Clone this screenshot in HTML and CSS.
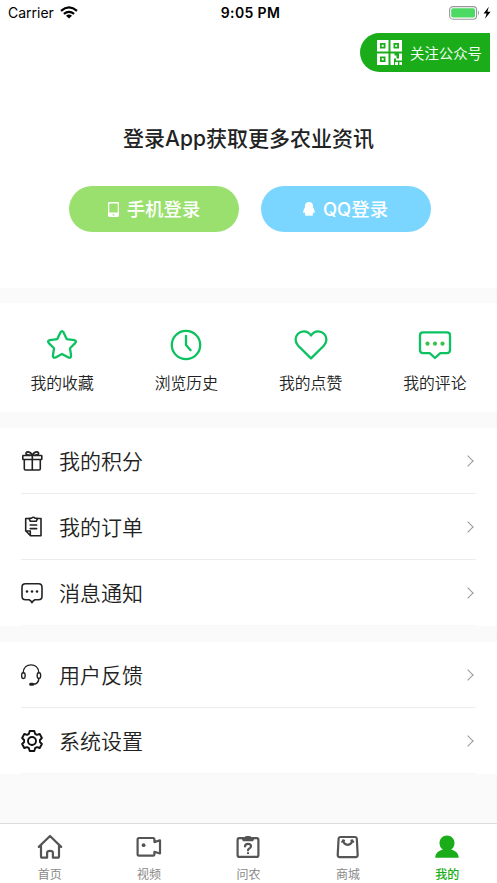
FILE: index.html
```html
<!DOCTYPE html>
<html lang="zh-CN">
<head>
<meta charset="utf-8">
<title>我的</title>
<link rel="stylesheet" href="styles.css">
</head>
<body>
<div class="app">
  <header class="hero">
    <div class="status">
      <div class="carrier"><span>Carrier</span>
        <svg width="18" height="13" viewBox="0 0 18 13"><g fill="none" stroke="#000" stroke-width="2.2"><path d="M1 4.8Q9-2 17 4.8"/><path d="M3.9 7.9Q9 3.8 14.1 7.9"/></g><path d="M9 12.6 6 9.7Q9 7.4 12 9.7z"/></svg>
      </div>
      <time class="time">9:05 PM</time>
      <svg class="battery" width="42" height="14" viewBox="0 0 42 14"><rect x=".6" y=".6" width="27" height="12.6" rx="3.4" fill="#fff" stroke="#98989c" stroke-width="1.1"/><rect x="2.2" y="2.2" width="23.8" height="9.4" rx="1.8" fill="#4cd964"/><path d="M29 4.6q2 2.3 0 4.6z" fill="#98989c"/><path d="M39.8.8 34.6 7.4H37.6L36 12.8 41.6 5.8H38.4z"/></svg>
    </div>
    <a class="follow">
      <svg width="25" height="25" viewBox="0 0 25 25" fill="#fff"><path fill-rule="evenodd" d="M0 0h11.500v11.500H0zM3 3v5.500h5.500V3zM13.500 0H25v11.500H13.500zM16.500 3v5.500H22V3zM0 13.500h11.500V25H0zM3 16.500V22h5.500v-5.500z"/><path d="M4.700 4.700h2v2h-2zM18.200 4.700h2v2h-2zM4.700 18.200h2v2h-2zM13.500 13.500h4v2h2v3H22v-5h3v7h-6v-2h-2V25h-3.500zM18 22h3v3h-3zM22.400 22H25v3h-2.600z"/></svg>
      <span>关注公众号</span>
    </a>
    <h1 class="title">登录App获取更多农业资讯</h1>
    <div class="logins">
      <a class="login phone"><svg width="11" height="15" viewBox="0 0 11 15"><path fill="#fff" fill-rule="evenodd" d="M1.400 0h8.200Q11 0 11 1.400v12.200Q11 15 9.600 15H1.400Q0 15 0 13.600V1.400Q0 0 1.400 0zM1.300 1.400v9.200h8.400V1.400zM4.700 12.200h1.600v1.200H4.700z"/></svg><span>手机登录</span></a>
      <a class="login qq"><svg width="12" height="14" viewBox="0 0 12 14"><path fill="#fff" d="M6 0C3.300 0 1.900 1.800 1.900 4.400V5.500C1 7 0 9 .3 10.800q.2.800 1.200-.5.200 1 .9 1.700Q1.500 12.600 2 13.300q2 1 4 .1 2 .9 4-.1.500-.7-.4-1.300.7-.7.9-1.700 1 1.300 1.200.5C12 9 11 7 10.100 5.500V4.400C10.100 1.800 8.700 0 6 0z"/></svg><span>QQ登录</span></a>
    </div>
  </header>

  <nav class="quick">
    <a><svg width="34" height="34" viewBox="0 0 34 34"><path d="M15.400 4.400q1.600-2.600 3.200 0l3.100 6.700 7.500 1q2.800.7 1 3l-5.200 5.100 1.100 7.400q0 2.800-2.700 1.800L17 26l-6.400 3.400q-2.700 1-2.700-1.800L9 20.200l-5.200-5.100q-1.800-2.300 1-3l7.500-1z"/></svg><span>我的收藏</span></a>
    <a><svg width="34" height="34" viewBox="0 0 34 34"><circle cx="17" cy="17" r="14.200"/><path d="M17 8v9l4.600 5.200"/></svg><span>浏览历史</span></a>
    <a><svg width="34" height="34" viewBox="0 0 34 34"><path d="M17 7.500C15.300 4.800 12.600 3.300 9.900 3.300 5.300 3.300 1.600 7 1.600 11.500c0 2.600 1 4.500 2.600 6.200L17 30.400l12.800-12.700c1.600-1.700 2.600-3.600 2.600-6.200 0-4.500-3.700-8.200-8.300-8.200-2.700 0-5.400 1.500-7.100 4.200z"/></svg><span>我的点赞</span></a>
    <a><svg width="34" height="34" viewBox="0 0 34 34"><path d="M5 4.400h24q3 0 3 3v14.700q0 3-3 3h-6.700L17 30l-5.300-4.900H5q-3 0-3-3V7.400q0-3 3-3z"/><g class="dots"><circle cx="9.500" cy="15.700" r="2.100"/><circle cx="17" cy="15.700" r="2.100"/><circle cx="24.500" cy="15.700" r="2.100"/></g></svg><span>我的评论</span></a>
  </nav>

  <section class="list">
    <a class="row"><svg class="icon" width="24" height="24" viewBox="0 0 24 24"><path d="M3.300 6.500h18q.5 0 .5.500v3q0 .5-.5.500h-18q-.5 0-.5-.5V7q0-.5.500-.5zM4.300 10.500v9.300q0 1.200 1.200 1.200h13.600q1.200 0 1.200-1.200v-9.300M12.300 6.500V21M12.300 6.200C7.300 6.400 5.300 5.200 6.100 3.800 7.300 2 10.800 3 12.300 6.200 13.800 3 17.300 2 18.500 3.800 19.300 5.200 17.300 6.400 12.300 6.200"/></svg><span>我的积分</span><i class="arrow"></i></a>
    <a class="row"><svg class="icon" width="24" height="24" viewBox="0 0 24 24"><path d="M9 3.500H5.700v12.300l4.800 5H21V3.500h-3.400M5.700 16h4.600v4.600M10.200 10h6.500M10.200 13.600h6.500M9 3.300h2.500q1.800-2.200 3.600 0h2.500L16.200 6.300h-5.800z"/></svg><span>我的订单</span><i class="arrow"></i></a>
    <a class="row"><svg class="icon" width="24" height="24" viewBox="0 0 24 24"><path d="M5.500 2.700h13q3.500 0 3.500 3.500v9.100q0 3.500-3.500 3.500h-3.600Q13 19.700 12 21.700 11 19.700 9.100 18.800H5.500Q2 18.800 2 15.300V6.200q0-3.500 3.500-3.500z"/><g class="dots"><circle cx="7" cy="10.500" r="1.300"/><circle cx="12" cy="10.500" r="1.300"/><circle cx="17" cy="10.500" r="1.300"/></g></svg><span>消息通知</span><i class="arrow"></i></a>
  </section>

  <section class="list second">
    <a class="row"><svg class="icon thin" width="24" height="24" viewBox="0 0 24 24"><path d="M3.200 9.700C3.500 4.500 6.900 1.900 11 1.900S18.500 4.500 18.800 9.700M18.800 15.300C18.800 19.500 16.900 21.100 13.500 21.300"/><rect x="1.700" y="9.700" width="3.400" height="5.800" rx="1.700"/><rect x="17.200" y="9.700" width="3.400" height="5.800" rx="1.700"/><rect x="9.800" y="20.400" width="3.700" height="1.700" rx=".8" fill="#222"/></svg><span>用户反馈</span><i class="arrow"></i></a>
    <a class="row"><svg class="icon bold" width="24" height="24" viewBox="0 0 24 24"><path d="M9.700 2h4.600l.8 2.800 1.800 1 2.800-.8 2.200 4-2 2v2l2 2-2.200 4-2.800-.8-1.800 1-.8 2.800H9.700l-.8-2.800-1.800-1-2.800.8-2.200-4 2-2v-2l-2-2 2.200-4 2.800.8 1.800-1z"/><circle cx="12" cy="12" r="4"/></svg><span>系统设置</span><i class="arrow"></i></a>
  </section>

  <nav class="tabs">
    <a><svg width="26" height="26" viewBox="0 0 26 26"><path d="M1.800 12.900 13 2l11.200 10.900M4 11v11.200q0 1.500 1.500 1.500h4.600v-5q0-1.900 2.900-1.900t2.900 1.900v5h4.600q1.500 0 1.500-1.500V11"/></svg><span>首页</span></a>
    <a><svg width="26" height="26" viewBox="0 0 26 26"><path d="M3 4h14q1.400 0 1.400 1.400v2.700L24 6.300v13.200l-5.600-1.700v2.500q0 1.400-1.400 1.400H3q-1.400 0-1.400-1.400V5.400Q1.600 4 3 4z"/><circle class="fill" cx="7.600" cy="11.200" r="1.900"/></svg><span>视频</span></a>
    <a><svg width="26" height="26" viewBox="0 0 26 26"><rect x="2.600" y="4.200" width="20.800" height="18.700" rx="1.700"/><path class="fill" d="M6 3.700h3.400q.5-1.800 2-1.800h3.200q1.500 0 2 1.800H20l-2 3.500H8z"/><path d="M10 12.500q0-2.700 3-2.700t3 2.400q0 1.400-1.700 2.200-1.300.6-1.300 1.900M13 19v.2"/></svg><span>问农</span></a>
    <a><svg width="26" height="26" viewBox="0 0 26 26"><path d="M5.200 3h15q1.500 0 1.600 1.500l.9 16.600q0 2-2 2h-16q-2 0-2-2l.9-16.600Q3.700 3 5.200 3zM8.100 6.300q.8 4.500 4.600 4.500t4.600-4.500M7.200 7.600l1.800-1M18.200 7.600l-1.800-1"/></svg><span>商城</span></a>
    <a class="active"><svg width="26" height="26" viewBox="0 0 26 26"><path class="fill" d="M13 1.500c-4.200 0-7.500 3.300-7.500 7.600 0 3 1.300 5.300 3.500 6.500C4.500 16.800 1.300 19.200 1.300 23.800h23.400C24.700 19.200 21.500 16.800 17 15.600c2.200-1.200 3.500-3.500 3.500-6.500 0-4.300-3.300-7.600-7.500-7.600z"/></svg><span>我的</span></a>
  </nav>
</div>
</body>
</html>
```

FILE: styles.css
```css
* { box-sizing: border-box; }
body {
  margin: 0;
  background: #fafafa;
  color: #222;
  font-family: Inter, "Noto Sans CJK SC", sans-serif;
}
svg { display: block; flex: none; }
.app { display: flex; flex-direction: column; height: 883px; overflow: hidden; }
.hero { height: 288px; background: #fff; display: flex; flex-direction: column; align-items: center; }
.status {
  width: 100%; height: 25px; padding: 0 6px 0 8px;
  display: grid; grid-template-columns: 1fr auto 1fr; align-items: center;
  color: #000; font-size: 14px;
}
.carrier { display: flex; align-items: center; gap: 6px; }
.time { font-weight: 600; letter-spacing: .35px; padding-left: 2px; }
.battery { justify-self: end; }
.follow {
  align-self: flex-end; margin: 8px 7px 0 0; width: 130px; height: 39px;
  padding-left: 17px; display: flex; align-items: center; gap: 8px;
  border-radius: 20px 0 0 20px; background: #1aad19; color: #fff;
  font-size: 14.4px; font-weight: 350; white-space: nowrap;
}
.title { margin: 51px 0 0; font-size: 21px; line-height: 32px; font-weight: 500; white-space: nowrap; }
.logins { display: flex; gap: 22px; margin-top: 31px; margin-left: 2px; }
.login {
  width: 170px; height: 46px; border-radius: 23px; color: #fff;
  display: flex; align-items: center; justify-content: center; gap: 8px;
  font-size: 18.4px; font-weight: 500;
}
.login span { margin-top: -2px; }
.phone { background: #9ae06e; padding-left: 1px; }
.qq { background: #7bd6ff; }
.quick { height: 109px; margin-top: 15px; background: #fff; display: grid; grid-template-columns: repeat(4, 1fr); }
.quick a { padding-top: 25px; display: flex; flex-direction: column; align-items: center; gap: 10px; font-size: 15.8px; font-weight: 350; line-height: 24px; }
.quick svg { fill: none; stroke: #0bc160; stroke-width: 2.3; stroke-linecap: round; stroke-linejoin: round; }
.quick .dots { fill: #36c24b; stroke: none; }
.list { margin-top: 16px; padding: 0 21px; background: #fff; }
.row { height: 66px; display: flex; align-items: center; border-bottom: 1px solid #ededed; font-size: 21px; font-weight: 350; }
.row:last-child { border-bottom-color: #f7f7f7; }
.row span { margin: -2px 0 0 15px; }
.icon { fill: none; stroke: #222; stroke-width: 1.6; stroke-linejoin: round; stroke-linecap: round; margin-left: -1px; }
.icon.thin { stroke-width: 1.4; }
.icon.bold { stroke: #111; stroke-width: 1.9; }
.icon .dots { fill: #222; stroke: none; }
.arrow { width: 8px; height: 8px; margin: 0 4px 0 auto; border: solid #999; border-width: 1.3px 1.3px 0 0; transform: rotate(45deg); }
.tabs { height: 60px; margin-top: auto; background: #fff; border-top: 1px solid #dcdcdc; display: grid; grid-template-columns: repeat(5, 1fr); }
.tabs a { padding-top: 10px; display: flex; flex-direction: column; align-items: center; gap: 6px; color: #888; font-size: 12px; line-height: 18px; }
.tabs svg { fill: none; stroke: #555; stroke-width: 2.2; stroke-linecap: round; stroke-linejoin: round; }
.tabs .fill { fill: #555; stroke: none; }
.tabs .active { color: #1aad19; font-weight: 500; }
.tabs .active .fill { fill: #1aad19; }
```
